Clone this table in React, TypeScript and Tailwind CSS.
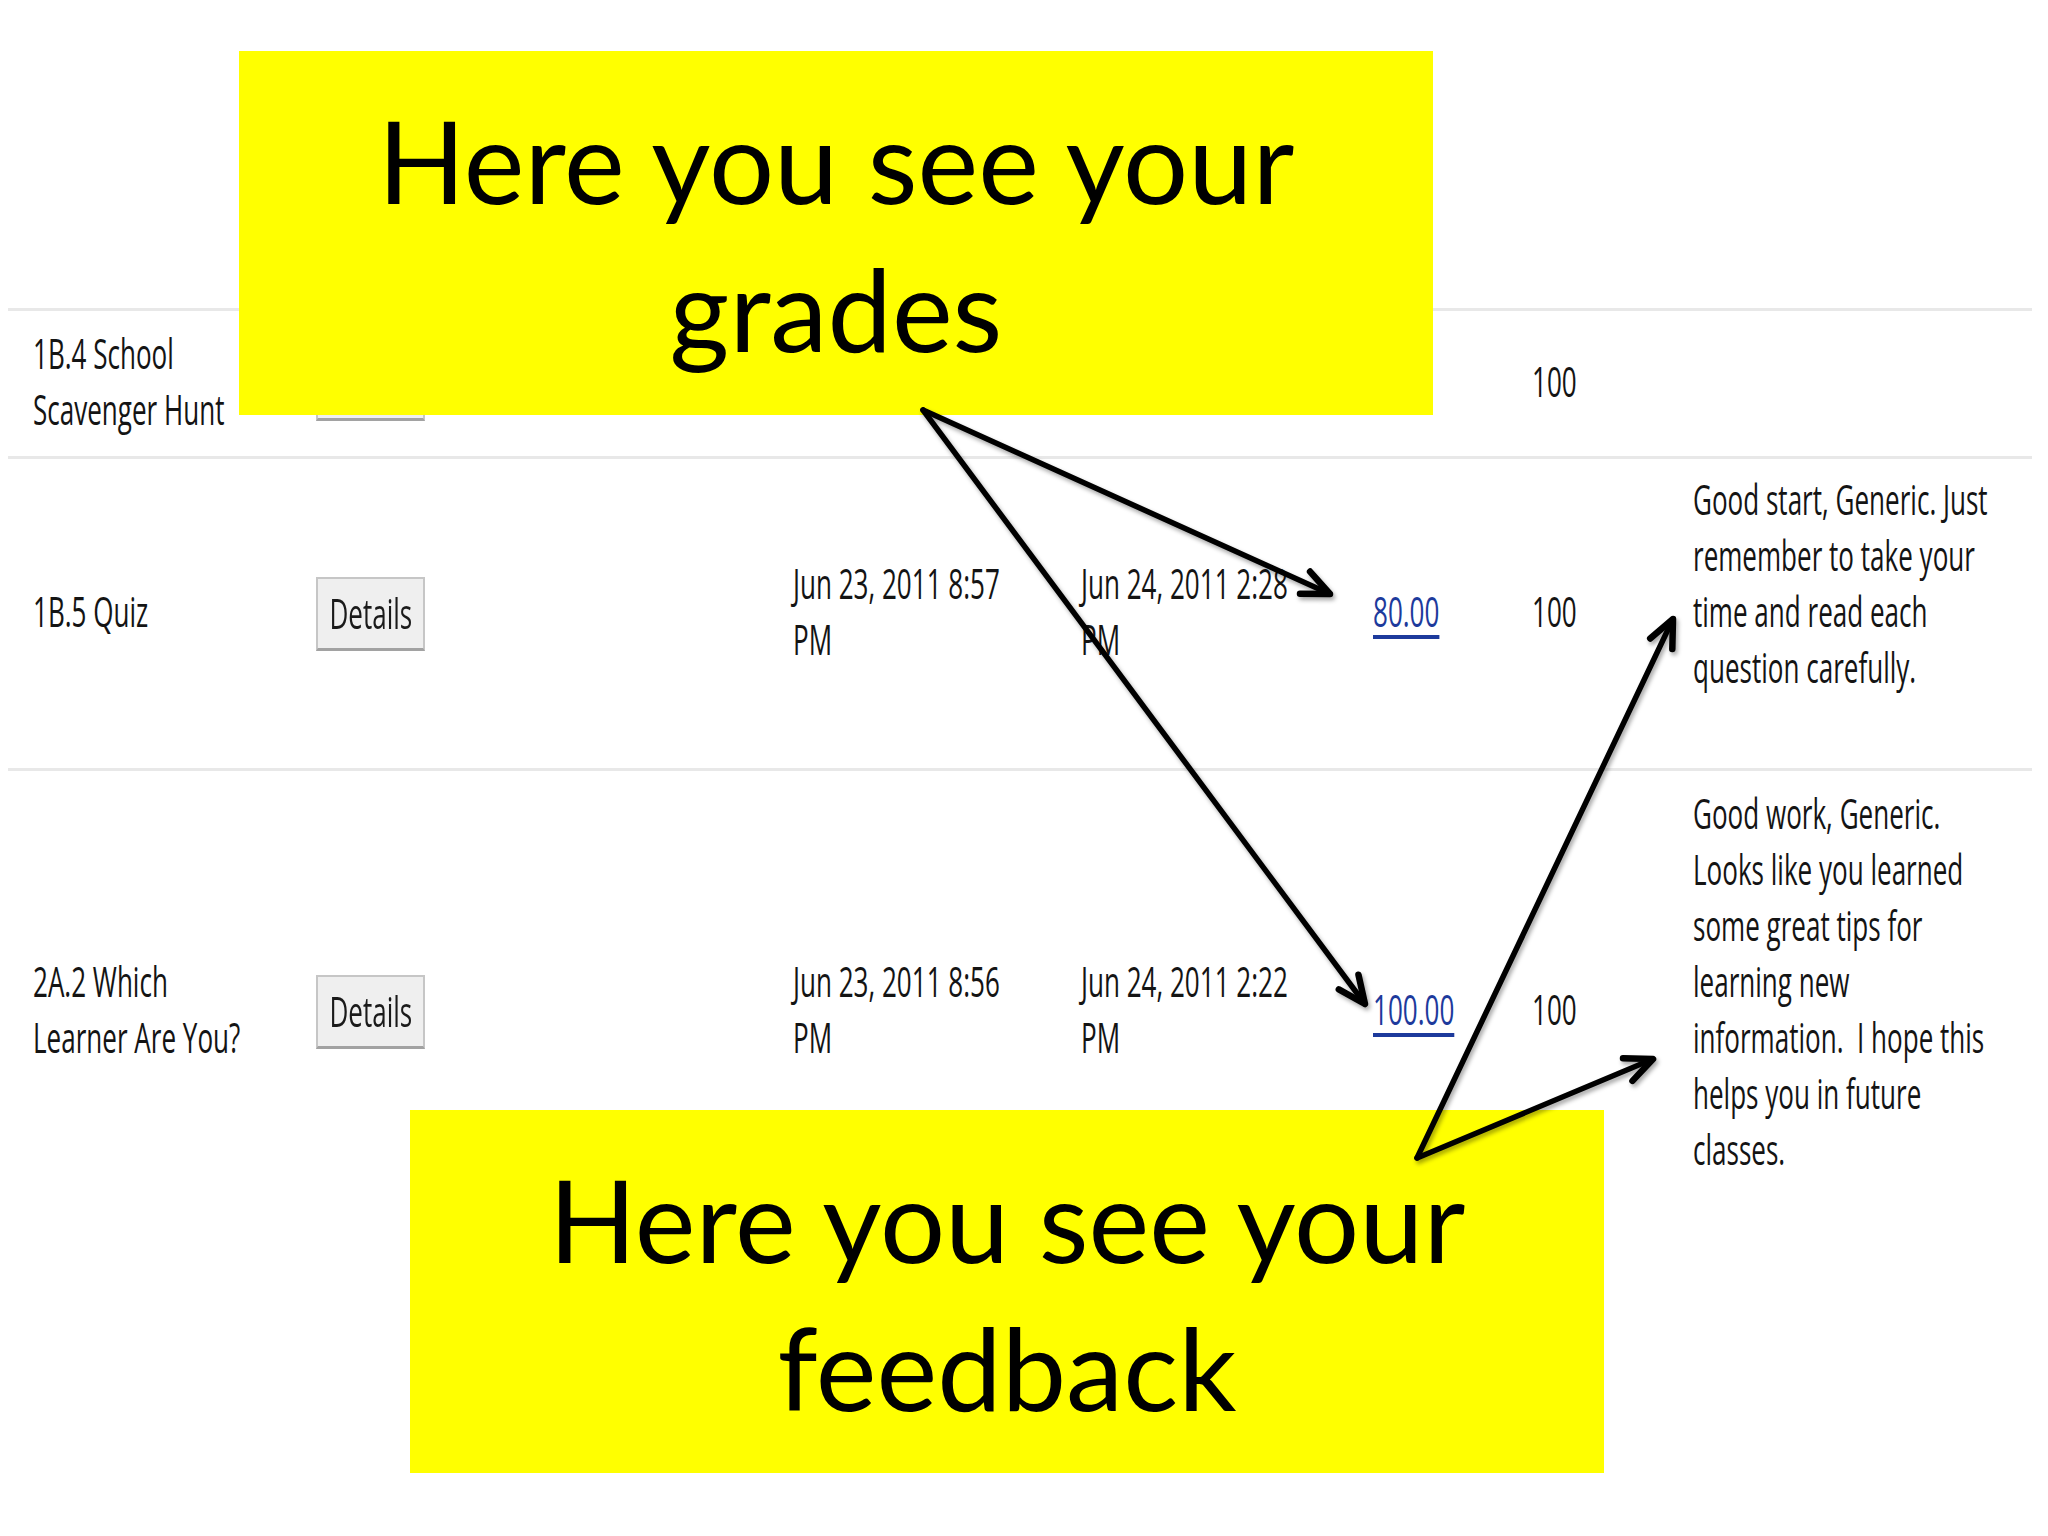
import clsx from 'clsx';

const COLS = 'grid grid-cols-[283px_477px_288px_292px_159px_161px_339px] items-center';

type Row = {
  name: string[];
  submitted?: string[];
  graded?: string[];
  grade?: string;
  points: string;
  feedback?: string[];
  height: string;
};

const ROWS: Row[] = [
  {
    name: ['1B.4 School', 'Scavenger Hunt'],
    points: '100',
    height: 'h-[148px]',
  },
  {
    name: ['1B.5 Quiz'],
    submitted: ['Jun 23, 2011 8:57', 'PM'],
    graded: ['Jun 24, 2011 2:28', 'PM'],
    grade: '80.00',
    points: '100',
    feedback: ['Good start, Generic. Just', 'remember to take your', 'time and read each', 'question carefully.', ''],
    height: 'h-[312px]',
  },
  {
    name: ['2A.2 Which', 'Learner Are You?'],
    submitted: ['Jun 23, 2011 8:56', 'PM'],
    graded: ['Jun 24, 2011 2:22', 'PM'],
    grade: '100.00',
    points: '100',
    feedback: [
      'Good work, Generic.',
      'Looks like you learned',
      'some great tips for',
      'learning new',
      'information.  I hope this',
      'helps you in future',
      'classes.',
      '',
    ],
    height: 'h-[484px]',
  },
];

// the slide squashed the gradebook screenshot sideways, so the text is drawn narrow
function Narrow({ lines, className }: { lines: string[]; className?: string }) {
  return (
    <div className={clsx('origin-left scale-x-[0.62] whitespace-pre leading-[56px] -translate-y-[3px]', className)}>
      {lines.map((l, i) => (
        <div key={i}>{l || '\u00a0'}</div>
      ))}
    </div>
  );
}

function DetailsButton() {
  return (
    <button className="w-[109px] h-[74px] bg-[#efefef] border-2 border-[#c6c6c6] border-b-[3px] border-b-[#a2a2a2] flex items-center justify-center">
      <span className="inline-block origin-center scale-x-[0.62] text-[42px] leading-[56px] font-medium text-[#1a1a1a] font-['Open_Sans',sans-serif]">
        Details
      </span>
    </button>
  );
}

function Arrow({ x1, y1, x2, y2 }: { x1: number; y1: number; x2: number; y2: number }) {
  const a = Math.atan2(y2 - y1, x2 - x1);
  const len = 30;
  const spread = 0.42;
  const p1 = `${x2 - len * Math.cos(a - spread)},${y2 - len * Math.sin(a - spread)}`;
  const p2 = `${x2 - len * Math.cos(a + spread)},${y2 - len * Math.sin(a + spread)}`;
  return (
    <g>
      <line x1={x1} y1={y1} x2={x2} y2={y2} />
      <polyline points={`${p1} ${x2},${y2} ${p2}`} fill="none" strokeWidth={6.5} />
    </g>
  );
}

function Callout({ pos, lines }: { pos: string; lines: string[] }) {
  return (
    <div
      className={clsx(
        'absolute w-[1194px] bg-[#ffff00] flex flex-col items-center justify-center text-center text-black',
        "font-['Lato',sans-serif] text-[115px] leading-[148px]",
        pos
      )}
    >
      {lines.map((l) => (
        <div key={l}>{l}</div>
      ))}
    </div>
  );
}

export default function App() {
  return (
    <div className="relative w-[2048px] h-[1536px] overflow-hidden bg-white">
      {/* gradebook rows */}
      <div className="pt-[308px] font-['Open_Sans',sans-serif] font-medium text-[42px] text-[#141414]">
        {ROWS.map((r, i) => (
          <div key={i} className={clsx(COLS, r.height, 'ml-[8px] w-[2024px] pl-[25px] border-t-[3px] border-[#e8e8e8]')}>
            <Narrow lines={r.name} />
            <div>
              <DetailsButton />
            </div>
            <div>{r.submitted && <Narrow lines={r.submitted} />}</div>
            <div>{r.graded && <Narrow lines={r.graded} />}</div>
            <div>
              {r.grade && (
                <Narrow
                  lines={[r.grade]}
                  className="text-[#1d3a9c] underline decoration-[4px] underline-offset-[8px]"
                />
              )}
            </div>
            <Narrow lines={[r.points]} />
            <div>{r.feedback && <Narrow lines={r.feedback} />}</div>
          </div>
        ))}
      </div>

      <Callout pos="left-[239px] top-[51px] h-[364px]" lines={['Here you see your', 'grades']} />
      <Callout pos="left-[410px] top-[1110px] h-[363px]" lines={['Here you see your', 'feedback']} />

      {/* arrows */}
      <svg
        className="absolute inset-0 pointer-events-none"
        width={2048}
        height={1536}
        viewBox="0 0 2048 1536"
      >
        <defs>
          <filter id="sh" x="-10%" y="-10%" width="120%" height="120%">
            <feDropShadow dx="2" dy="3" stdDeviation="2" floodColor="#000" floodOpacity="0.35" />
          </filter>
        </defs>
        <g stroke="#000" strokeWidth={5.5} strokeLinecap="round" strokeLinejoin="round" filter="url(#sh)">
          <Arrow x1={923} y1={410} x2={1330} y2={594} />
          <Arrow x1={923} y1={410} x2={1365} y2={1004} />
          <Arrow x1={1417} y1={1158} x2={1673} y2={619} />
          <Arrow x1={1417} y1={1158} x2={1653} y2={1059} />
        </g>
      </svg>
    </div>
  );
}
